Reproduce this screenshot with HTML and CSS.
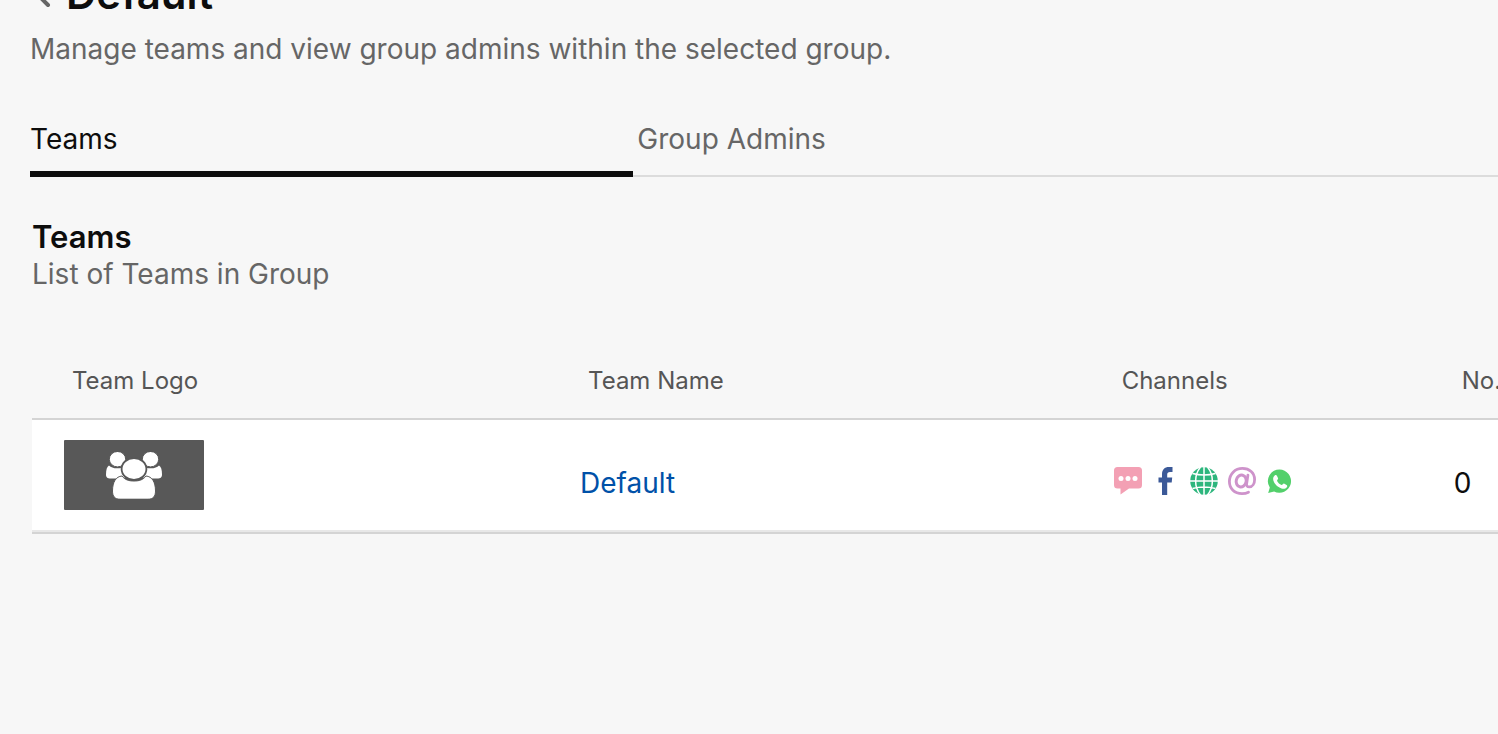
FILE: index.html
```html
<!DOCTYPE html>
<html lang="en">
<head>
<meta charset="utf-8">
<title>Default</title>
<link rel="stylesheet" href="styles.css">
</head>
<body>
<main class="page">
  <header class="page-header">
    <div class="title-row">
      <button class="back" type="button" aria-label="Back">
        <svg width="18" height="28" viewBox="0 0 18 28"><path d="M14 3 3 14l11 11" fill="none" stroke="#666" stroke-width="4" stroke-linecap="round"/></svg>
      </button>
      <h1 class="title">Default</h1>
    </div>
    <p class="lead">Manage teams and view group admins within the selected group.</p>
  </header>

  <div class="tabs" role="tablist">
    <button class="tab tab-active" type="button" role="tab" aria-selected="true">Teams</button>
    <button class="tab" type="button" role="tab" aria-selected="false">Group Admins</button>
  </div>

  <section class="teams">
    <h2 class="section-title">Teams</h2>
    <p class="section-text">List of Teams in Group</p>
    <table class="table">
      <colgroup><col class="col-logo"><col class="col-name"><col class="col-channels"><col></colgroup>
      <thead>
        <tr><th>Team Logo</th><th>Team Name</th><th>Channels</th><th>No.</th></tr>
      </thead>
      <tbody>
        <tr>
          <td class="logo-cell">
            <div class="logo">
              <svg width="56" height="47" viewBox="0 0 56 47" fill="#fff">
                <path d="M3 13.500C5 15.500 8 16.500 12 16.300c2 0 3.500-.6 5-1 0 4 1.500 7.700 4 9.700-2 .3-4 1-5.500 1.500H5c-4 0-5-1.500-5-4 0-5 1-8 3-9Z"/>
                <path d="M53 13.500c-2 2-5 3-9 2.800-2 0-3.500-.6-5-1 0 4-1.500 7.700-4 9.700 2 .3 4 1 5.500 1.500H51c4 0 5-1.500 5-4 0-5-1-8-3-9Z"/>
                <ellipse cx="11.500" cy="7.200" rx="8.200" ry="7.700" stroke="#585858"/>
                <ellipse cx="44.500" cy="7.200" rx="8.200" ry="7.700" stroke="#585858"/>
                <path d="M16 24c3 4 7 5 12 5s9-1 12-5c6 .5 9.500 6 9.500 15 0 5.500-2.500 8.200-7.500 8.200H14c-5 0-7.500-2.700-7.500-8.200C6.500 30 10 24.500 16 24Z" stroke="#585858"/>
                <ellipse cx="28" cy="17" rx="12.400" ry="11" stroke="#585858" stroke-width="1.800"/>
              </svg>
            </div>
          </td>
          <td><a class="link" href="#default">Default</a></td>
          <td>
            <div class="channels">
              <svg width="28" height="28" viewBox="0 0 28 28" role="img" aria-label="Chat"><path d="M3.500 0h21Q28 0 28 3.500v14.500q0 3.500-3.500 3.500H15L6.500 27.500v-6h-3Q0 21.500 0 18V3.500Q0 0 3.500 0Z" fill="#f3a0b4"/><g fill="#fff"><circle cx="7" cy="11.500" r="2.500"/><circle cx="14" cy="11.500" r="2.500"/><circle cx="21" cy="11.500" r="2.500"/></g></svg>
              <svg width="28" height="28" viewBox="0 0 28 28" role="img" aria-label="Facebook"><path d="M10 28V15.500H6.500V10.500H10V7.500C10 2.500 12.500 0 17 0h3.500v5H18c-2 0-2.800.8-2.800 2.800v2.700h5l-.5 5h-4.500V28Z" fill="#3b5998"/></svg>
              <svg width="28" height="28" viewBox="0 0 28 28" role="img" aria-label="Web"><circle cx="14" cy="14" r="13.800" fill="#2db67d"/><g fill="none" stroke="#fff" stroke-width="1.500"><path d="M14 0v28M0 14h28M2.500 6.500Q14 9.500 25.500 6.500M2.500 21.500Q14 18.500 25.500 21.500"/><path d="M10.500 0C4 8 4 20 10.500 28M17.500 0C24 8 24 20 17.500 28"/></g></svg>
              <svg width="28" height="28" viewBox="0 0 28 28" role="img" aria-label="Email" fill="none" stroke="#ce93cb" stroke-linecap="round"><path d="M20.500 25.200c-2 1-4.200 1.400-6.500 1.400C6.500 26.600 1.400 21.500 1.400 14.500 1.400 7 7 1.400 14.500 1.400c7 0 12.100 4.400 12.100 11 0 4.300-2.200 7.500-5.300 7.500-2 0-3-1.200-2.700-3.200l1.300-8.500" stroke-width="2.800"/><ellipse cx="13.200" cy="14" rx="5" ry="6" transform="rotate(14 13.200 14)" stroke-width="3"/></svg>
              <svg width="28" height="28" viewBox="0 0 28 28" role="img" aria-label="WhatsApp"><path d="M13.500 2.500a11.600 11.600 0 1 1-5.400 21.900L2.200 26l1.600-5.600A11.600 11.600 0 0 1 13.500 2.500Z" fill="#53d06b"/><path d="M8.700 8.500c.8-.7 1.800-.5 2.200.3l1.200 2.500c.3.800-1.300 1.900-1 2.600 1 1.900 2.500 3.200 4.400 4 .8.3 1.700-1.600 2.500-1.300l2.600 1.300c.8.400.8 1.500.2 2.300-1.300 1.700-3.300 1.900-5.300 1.200-4-1.400-7.200-4.500-8.200-8.200-.4-1.800 0-3.500 1.400-4.700Z" fill="#fff"/></svg>
            </div>
          </td>
          <td>0</td>
        </tr>
      </tbody>
    </table>
  </section>
</main>
</body>
</html>
```
FILE: styles.css
```css
* { box-sizing: border-box; }
body {
  margin: 0;
  background: #f7f7f7;
  color: #0d0d0d;
  font-family: Inter, "Liberation Sans", sans-serif;
  font-size: 28px;
  line-height: 36px;
  overflow: hidden;
}
h1, h2, p { margin: 0; }
button { font: inherit; border: 0; padding: 0; background: none; cursor: pointer; }
.page { padding-left: 30px; }
.page-header { margin-top: -32px; }
.title-row { display: flex; align-items: center; gap: 14px; padding-left: 4px; }
.back { display: flex; }
.title { font-size: 42px; line-height: 52px; font-weight: 600; }
.lead { margin-top: 11px; color: #666; white-space: nowrap; }
.tabs {
  display: flex;
  gap: 4px;
  margin-top: 53px;
  border-bottom: 2px solid #dcdcdc;
}
.tab {
  flex: 0 0 41.1%;
  height: 57px;
  margin-bottom: -2px;
  padding-bottom: 20px;
  text-align: left;
  color: #666;
}
.tab-active { color: #0d0d0d; border-bottom: 6px solid #0d0d0d; padding-bottom: 14px; }
.teams { padding: 41px 0 0 2px; }
.section-title { font-size: 31px; line-height: 38px; font-weight: 600; }
.section-text { color: #666; }
.table {
  width: 100%;
  margin-top: 52px;
  table-layout: fixed;
  border-spacing: 0;
  border-bottom: 2px solid #d4d4d4;
  white-space: nowrap;
}
.col-logo { width: 35.2%; }
.col-name { width: 36.4%; }
.col-channels { width: 23.2%; }
.table th {
  height: 76px;
  padding: 0 0 0 40px;
  border-bottom: 2px solid #d4d4d4;
  color: #555;
  font-size: 24px;
  font-weight: 400;
  text-align: left;
}
.table td {
  padding: 16px 0 0 32px;
  background: #fff;
  border-bottom: 2px solid #e8e8e8;
  vertical-align: middle;
}
.table .logo-cell { padding: 20px 0 20px 32px; }
.logo {
  display: flex;
  justify-content: center;
  width: 140px;
  height: 70px;
  padding-top: 12px;
  background: #585858;
  border-radius: 1px;
}
.link { color: #0051a8; text-decoration: none; }
.channels { display: flex; gap: 10px; padding-bottom: 4px; }
```
